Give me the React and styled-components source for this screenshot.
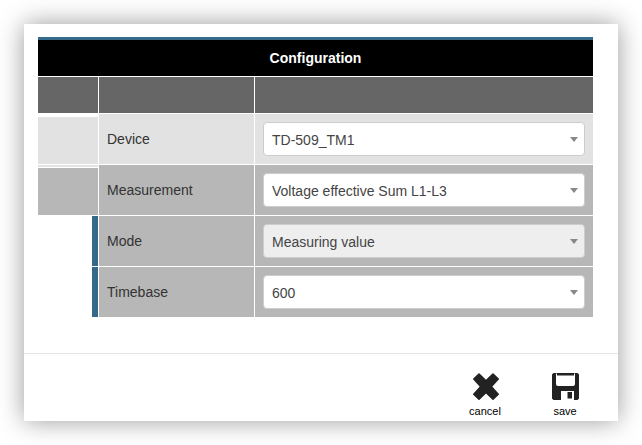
import React, { useState } from 'react';
import styled, { createGlobalStyle } from 'styled-components';

const GlobalStyle = createGlobalStyle`
  * {
    box-sizing: border-box;
  }
  body {
    margin: 0;
    background: #fff;
    font-family: Arial, 'Liberation Sans', sans-serif;
    font-size: 14px;
    line-height: 20px;
    color: #333;
  }
`;

const Page = styled.div`
  padding: 24px;
`;

const Dialog = styled.form`
  background: #fff;
  box-shadow: 0 0 24px rgba(0, 0, 0, 0.4);
`;

const DialogBody = styled.div`
  padding: 13px 25px 36px 14px;
`;

const ConfigTable = styled.table`
  width: 100%;
  border-collapse: separate;
  border-spacing: 0;
  table-layout: fixed;
  border-top: 3px solid #35698a;
`;

const MarkerCol = styled.col`
  width: 60px;
`;
const LabelCol = styled.col`
  width: 156px;
`;

const TitleCell = styled.th`
  height: 36px;
  padding: 0 8px;
  background: #000;
  color: #fff;
  font-weight: bold;
  text-align: center;
`;

const HeadCell = styled.td`
  height: 37px;
  padding: 0;
  background: #666;
  border-top: 1px solid #fff;
  border-left: 1px solid #fff;

  &:first-child {
    border-left: none;
  }
`;

const Cell = styled.td`
  height: 51px;
  padding: 8px;
  background: ${({ $light }) => ($light ? '#e2e2e2' : '#b7b7b7')};
  border-top: 1px solid #fff;
  border-left: 1px solid #fff;
  vertical-align: top;
`;

const markerFills = {
  first: 'linear-gradient(#fff 3px, #e2e2e2 3px)',
  second: 'linear-gradient(#e2e2e2 2px, #fff 2px, #fff 3px, #b7b7b7 3px)',
  child: 'linear-gradient(to left, #35698a 6px, #fff 6px)',
};

const MarkerCell = styled.td`
  padding: 0;
  border-top: 1px solid #fff;
  background: ${({ $kind }) => markerFills[$kind]};
`;

const FieldLabel = styled.label`
  display: block;
  padding: 7px 0;
`;

const SelectBox = styled.div`
  position: relative;

  &::after {
    content: '';
    position: absolute;
    top: 15px;
    right: 7px;
    border: solid transparent;
    border-width: 5px 4px 0;
    border-top-color: #888;
    pointer-events: none;
  }
`;

const Select = styled.select`
  display: block;
  width: 100%;
  height: 34px;
  padding: 1px 24px 0 8px;
  appearance: none;
  background: #fff;
  border: 1px solid #ccc;
  border-radius: 4px;
  font: inherit;
  color: #444;

  &:disabled {
    background: #eee;
    color: #444;
    opacity: 1;
  }
`;

const DialogFooter = styled.div`
  display: flex;
  justify-content: flex-end;
  gap: 40px;
  padding: 19px 33px 2px;
  border-top: 1px solid #e5e5e5;
`;

const ActionButton = styled.button`
  display: flex;
  flex-direction: column;
  align-items: center;
  gap: 2px;
  min-width: 40px;
  padding: 0;
  background: none;
  border: none;
  font: inherit;
  font-size: 11px;
  line-height: 16px;
  color: #000;
  cursor: pointer;
`;

const CancelIcon = () => (
  <svg width="28" height="28" viewBox="0 0 28 28" aria-hidden="true">
    <path
      d="M15 7.8 L22 1 L27.2 6 L20.2 13.6 L27.2 21.2 L22 26.2 L15 19.4 L8 26.2 L2.8 21.2 L9.8 13.6 L2.8 6 L8 1Z"
      fill="#222"
      stroke="#222"
      strokeWidth="1.6"
      strokeLinejoin="round"
    />
  </svg>
);

const SaveIcon = () => (
  <svg width="28" height="28" viewBox="0 0 28 28" aria-hidden="true">
    <g fill="#222" transform="translate(1 0)">
      <path
        fillRule="evenodd"
        d="M1.5 0H25.5L27 1.5V25.5L25.5 27H1.5L0 25.5V1.5Z M4 0.5V11Q4 13 6 13H21Q23 13 23 11V0.5H22V2.5H5V0.5Z M9 18V27H22V18Z"
      />
      <path d="M15.5 19H20V25.5H15.5Z" />
    </g>
  </svg>
);

const fields = [
  {
    id: 'device',
    label: 'Device',
    value: 'TD-509_TM1',
    marker: 'first',
    light: true,
  },
  {
    id: 'measurement',
    label: 'Measurement',
    value: 'Voltage effective Sum L1-L3',
    marker: 'second',
  },
  {
    id: 'mode',
    label: 'Mode',
    value: 'Measuring value',
    marker: 'child',
    disabled: true,
  },
  { id: 'timebase', label: 'Timebase', value: '600', marker: 'child' },
];

function FieldRow({ field, value, onChange }) {
  const { id, label, marker, light, disabled } = field;

  return (
    <tr>
      <MarkerCell $kind={marker} />
      <Cell $light={light}>
        <FieldLabel htmlFor={id}>{label}</FieldLabel>
      </Cell>
      <Cell $light={light}>
        <SelectBox>
          <Select
            id={id}
            value={value}
            disabled={disabled}
            onChange={(e) => onChange(id, e.target.value)}
          >
            <option>{field.value}</option>
          </Select>
        </SelectBox>
      </Cell>
    </tr>
  );
}

export default function App() {
  const [values, setValues] = useState(
    Object.fromEntries(fields.map(({ id, value }) => [id, value])),
  );

  const handleChange = (id, value) => {
    setValues({ ...values, [id]: value });
  };

  return (
    <Page>
      <GlobalStyle />
      <Dialog onSubmit={(e) => e.preventDefault()}>
        <DialogBody>
          <ConfigTable>
            <colgroup>
              <MarkerCol />
              <LabelCol />
              <col />
            </colgroup>
            <thead>
              <tr>
                <TitleCell colSpan={3}>Configuration</TitleCell>
              </tr>
              <tr>
                <HeadCell />
                <HeadCell />
                <HeadCell />
              </tr>
            </thead>
            <tbody>
              {fields.map((field) => (
                <FieldRow
                  key={field.id}
                  field={field}
                  value={values[field.id]}
                  onChange={handleChange}
                />
              ))}
            </tbody>
          </ConfigTable>
        </DialogBody>
        <DialogFooter>
          <ActionButton type="button">
            <CancelIcon />
            cancel
          </ActionButton>
          <ActionButton type="submit">
            <SaveIcon />
            save
          </ActionButton>
        </DialogFooter>
      </Dialog>
    </Page>
  );
}
